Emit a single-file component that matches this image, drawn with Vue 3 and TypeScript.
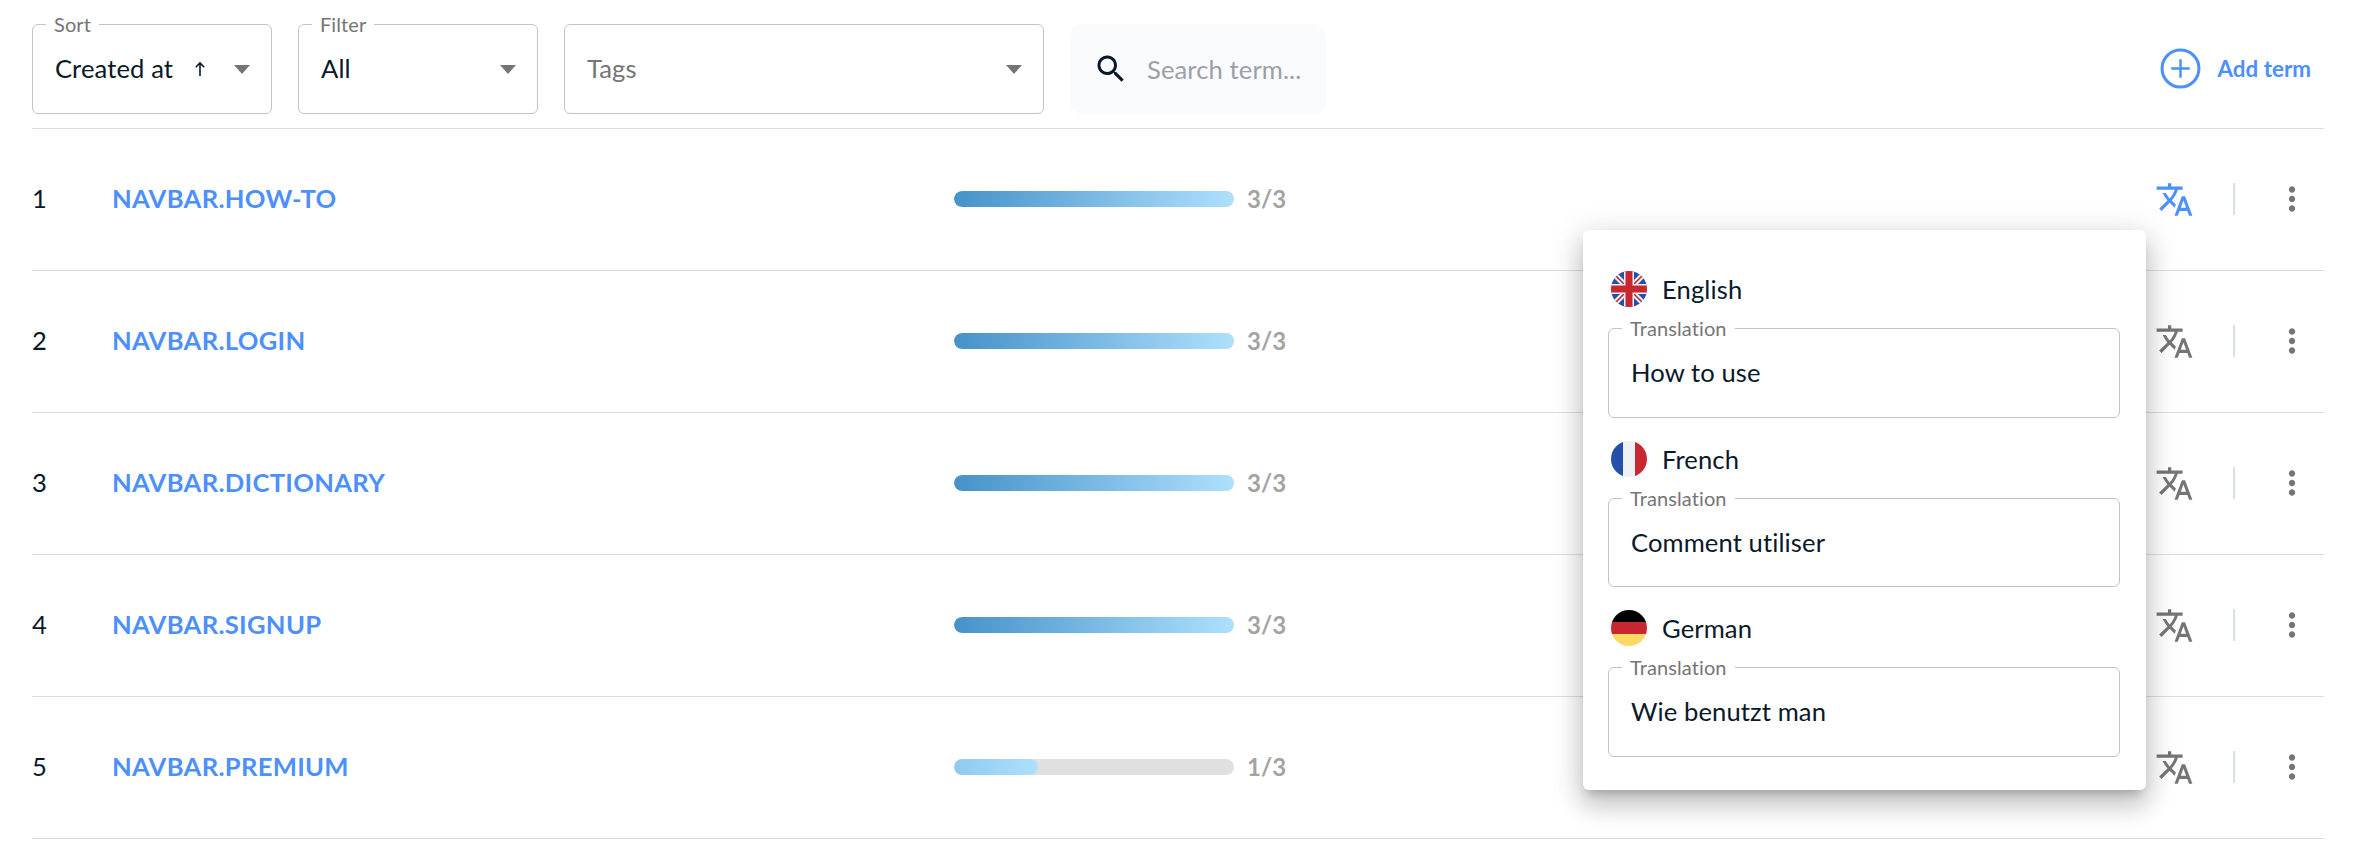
<template>
  <div class="page">
    <div class="toolbar">
      <div class="field select sort">
        <span class="field-label">Sort</span>
        <span class="value">Created at</span>
        <svg class="sort-arrow" viewBox="0 0 12 16"><path d="M6 15V2M1.8 6.2 6 2l4.2 4.2" /></svg>
        <i class="caret"></i>
      </div>
      <div class="field select filter">
        <span class="field-label">Filter</span>
        <span class="value">All</span>
        <i class="caret"></i>
      </div>
      <div class="field select tags">
        <span class="value placeholder">Tags</span>
        <i class="caret"></i>
      </div>
      <div class="search">
        <svg class="search-icon" viewBox="0 0 24 24">
          <path d="M15.5 14h-.79l-.28-.27C15.41 12.59 16 11.11 16 9.5 16 5.91 13.09 3 9.5 3S3 5.91 3 9.5 5.91 16 9.5 16c1.61 0 3.09-.59 4.23-1.57l.27.28v.79l5 4.99L20.49 19l-4.99-5zm-6 0C7.01 14 5 11.99 5 9.5S7.01 5 9.5 5 14 7.01 14 9.5 11.99 14 9.5 14z" />
        </svg>
        <span class="search-text">Search term...</span>
      </div>
      <button class="add-term">
        <svg class="add-icon" viewBox="0 0 40 40">
          <circle cx="20" cy="20" r="18" />
          <path d="M20 11v18M11 20h18" />
        </svg>
        <span>Add term</span>
      </button>
    </div>

    <div class="rows">
      <div v-for="(term, i) in terms" :key="term.key" class="row">
        <span class="index">{{ i + 1 }}</span>
        <a class="term-key">{{ term.key }}</a>
        <div class="progress">
          <div class="track">
            <div class="fill" :class="{ partial: term.done < 3 }" :style="{ width: barWidth(term.done) }"></div>
          </div>
          <span class="count">{{ term.done }}/3</span>
        </div>
        <div class="actions">
          <svg class="translate-icon" :class="{ active: i === 0 }" viewBox="0 0 24 24">
            <path d="M12.87 15.07l-2.54-2.51.03-.03c1.74-1.94 2.98-4.17 3.71-6.53H17V4h-7V2H8v2H1v2h11.17C11.5 7.92 10.44 9.75 9 11.35 8.07 10.32 7.3 9.19 6.69 8h-2c.73 1.63 1.73 3.17 2.98 4.56l-5.09 5.02L4 19l5-5 3.11 3.11.76-2.04zM18.5 10h-2L12 22h2l1.12-3h4.75L21 22h2l-4.5-12zm-2.62 7l1.62-4.33L19.12 17h-3.24z" />
          </svg>
          <span class="divider"></span>
          <svg class="more-icon" viewBox="0 0 24 24">
            <path d="M12 8c1.1 0 2-.9 2-2s-.9-2-2-2-2 .9-2 2 .9 2 2 2zm0 2c-1.1 0-2 .9-2 2s.9 2 2 2 2-.9 2-2-.9-2-2-2zm0 6c-1.1 0-2 .9-2 2s.9 2 2 2 2-.9 2-2-.9-2-2-2z" />
          </svg>
        </div>
      </div>
    </div>

    <div class="popover">
      <div v-for="lang in languages" :key="lang.name" class="lang">
        <div class="lang-head">
          <svg class="flag" viewBox="0 0 36 36">
            <template v-if="lang.code === 'en'">
              <rect width="36" height="36" fill="#2350ad" />
              <path d="M4 4 32 32M32 4 4 32" stroke="#f2f2f4" stroke-width="5.5" />
              <path d="M4 4 32 32M32 4 4 32" stroke="#c9272f" stroke-width="1.6" />
              <path d="M18 0V36M0 18H36" stroke="#f2f2f4" stroke-width="10" />
              <path d="M18 0V36M0 18H36" stroke="#c9272f" stroke-width="7" />
            </template>
            <template v-else-if="lang.code === 'fr'">
              <rect width="12" height="36" fill="#2350ad" />
              <rect x="12" width="12" height="36" fill="#eff0f3" />
              <rect x="24" width="12" height="36" fill="#c9272f" />
            </template>
            <template v-else>
              <rect width="36" height="12" fill="#000" />
              <rect y="12" width="36" height="12" fill="#c9272f" />
              <rect y="24" width="36" height="12" fill="#fbd964" />
            </template>
          </svg>
          <span>{{ lang.name }}</span>
        </div>
        <div class="field translation">
          <span class="field-label">Translation</span>
          <span class="value">{{ lang.text }}</span>
        </div>
      </div>
    </div>
  </div>
</template>

<script setup lang="ts">
interface Term {
  key: string
  done: number
}

const terms: Term[] = [
  { key: 'NAVBAR.HOW-TO', done: 3 },
  { key: 'NAVBAR.LOGIN', done: 3 },
  { key: 'NAVBAR.DICTIONARY', done: 3 },
  { key: 'NAVBAR.SIGNUP', done: 3 },
  { key: 'NAVBAR.PREMIUM', done: 1 }
]

const languages = [
  { code: 'en', name: 'English', text: 'How to use' },
  { code: 'fr', name: 'French', text: 'Comment utiliser' },
  { code: 'de', name: 'German', text: 'Wie benutzt man' }
]

function barWidth(done: number): string {
  return done >= 3 ? '100%' : '30%'
}
</script>

<style>
body {
  background: #fff;
}
</style>

<style scoped>
.page {
  position: relative;
  padding: 24px 40px 0 32px;
  font-family: Lato, sans-serif;
  font-size: 25.6px;
  letter-spacing: 0.1px;
  color: #0a1929;
}
.toolbar {
  display: flex;
  align-items: flex-start;
  box-sizing: border-box;
  height: 104.5px;
  border-bottom: 1.6px solid #d3e0e8;
}
.field {
  position: relative;
  box-sizing: border-box;
  height: 89.6px;
  display: flex;
  align-items: center;
  padding: 0 22px;
  border: 1.6px solid #c4c4c4;
  border-radius: 6px;
}
.field-label {
  position: absolute;
  top: -11px;
  left: 13px;
  padding: 0 8px;
  background: #fff;
  font-size: 20px;
  line-height: 20px;
  color: #757575;
}
.value {
  line-height: 30px;
  margin-top: -1px;
}
.select {
  width: 240px;
  margin-right: 26px;
}
.tags {
  width: 480px;
}
.placeholder {
  color: #757575;
}
.sort-arrow {
  width: 12px;
  height: 16px;
  margin-left: 21px;
  fill: none;
  stroke: #0a1929;
  stroke-width: 1.6;
}
.caret {
  position: absolute;
  right: 21px;
  top: 40px;
  width: 0;
  height: 0;
  border-left: 8px solid transparent;
  border-right: 8px solid transparent;
  border-top: 9px solid #757575;
}
.search {
  box-sizing: border-box;
  width: 256px;
  height: 89.6px;
  display: flex;
  align-items: center;
  padding-left: 23px;
  background: #fafbfd;
  border-radius: 12px;
}
.search-icon {
  width: 36px;
  height: 36px;
  fill: #0a1929;
}
.search-text {
  margin-left: 18px;
  color: #9aa0a8;
}
.add-term {
  display: flex;
  align-items: center;
  height: 89.6px;
  margin-left: auto;
  margin-right: 13px;
  padding: 0;
  border: none;
  background: none;
  font-family: inherit;
  font-size: 22.4px;
  font-weight: 700;
  color: #4d90fb;
}
.add-icon {
  width: 41px;
  height: 41px;
  margin-right: 17px;
  fill: none;
  stroke: #4d90fb;
}
.add-icon circle {
  stroke-width: 3;
}
.add-icon path {
  stroke-width: 2.4;
}
.row {
  display: grid;
  grid-template-columns: 80px 842px 1fr auto;
  align-items: center;
  box-sizing: border-box;
  height: 142px;
  border-bottom: 1.6px solid #d3e0e8;
}
.index {
  margin-top: -2px;
}
.term-key {
  margin-top: -2px;
  font-weight: 700;
  letter-spacing: 0.3px;
  color: #4d90fb;
}
.progress {
  display: flex;
  align-items: center;
}
.track {
  width: 280px;
  height: 16px;
  border-radius: 8px;
  background: #e0e0e0;
  overflow: hidden;
}
.fill {
  height: 100%;
  border-radius: 8px;
  background: linear-gradient(90deg, #4592c9, #aee0fd);
}
.fill.partial {
  background: linear-gradient(90deg, #8fcaef, #aee0fd);
}
.count {
  margin: -2px 0 0 13px;
  font-size: 24px;
  font-weight: 700;
  color: #a3a3a3;
}
.actions {
  display: flex;
  align-items: center;
  padding-right: 13px;
}
.translate-icon {
  width: 39px;
  height: 39px;
  fill: #757575;
}
.translate-icon.active {
  fill: #4d90fb;
}
.divider {
  width: 1.6px;
  height: 32px;
  margin: 0 38.5px 0 38.5px;
  background: #d5e0e8;
}
.more-icon {
  width: 38px;
  height: 38px;
  fill: #757575;
}
.popover {
  position: absolute;
  top: 230px;
  left: 1583px;
  box-sizing: border-box;
  width: 563.2px;
  display: flex;
  flex-direction: column;
  gap: 23px;
  padding: 41px 26.2px 33px 25px;
  background: #fff;
  border-radius: 6px;
  box-shadow: 0 8px 10px -5px rgba(0, 0, 0, 0.2), 0 16px 24px 2px rgba(0, 0, 0, 0.14), 0 6px 30px 5px rgba(0, 0, 0, 0.12);
}
.lang-head {
  display: flex;
  align-items: center;
  height: 36px;
  margin-bottom: 21px;
  padding-left: 3px;
}
.flag {
  width: 36px;
  height: 36px;
  margin-right: 15px;
  border-radius: 50%;
}
</style>
